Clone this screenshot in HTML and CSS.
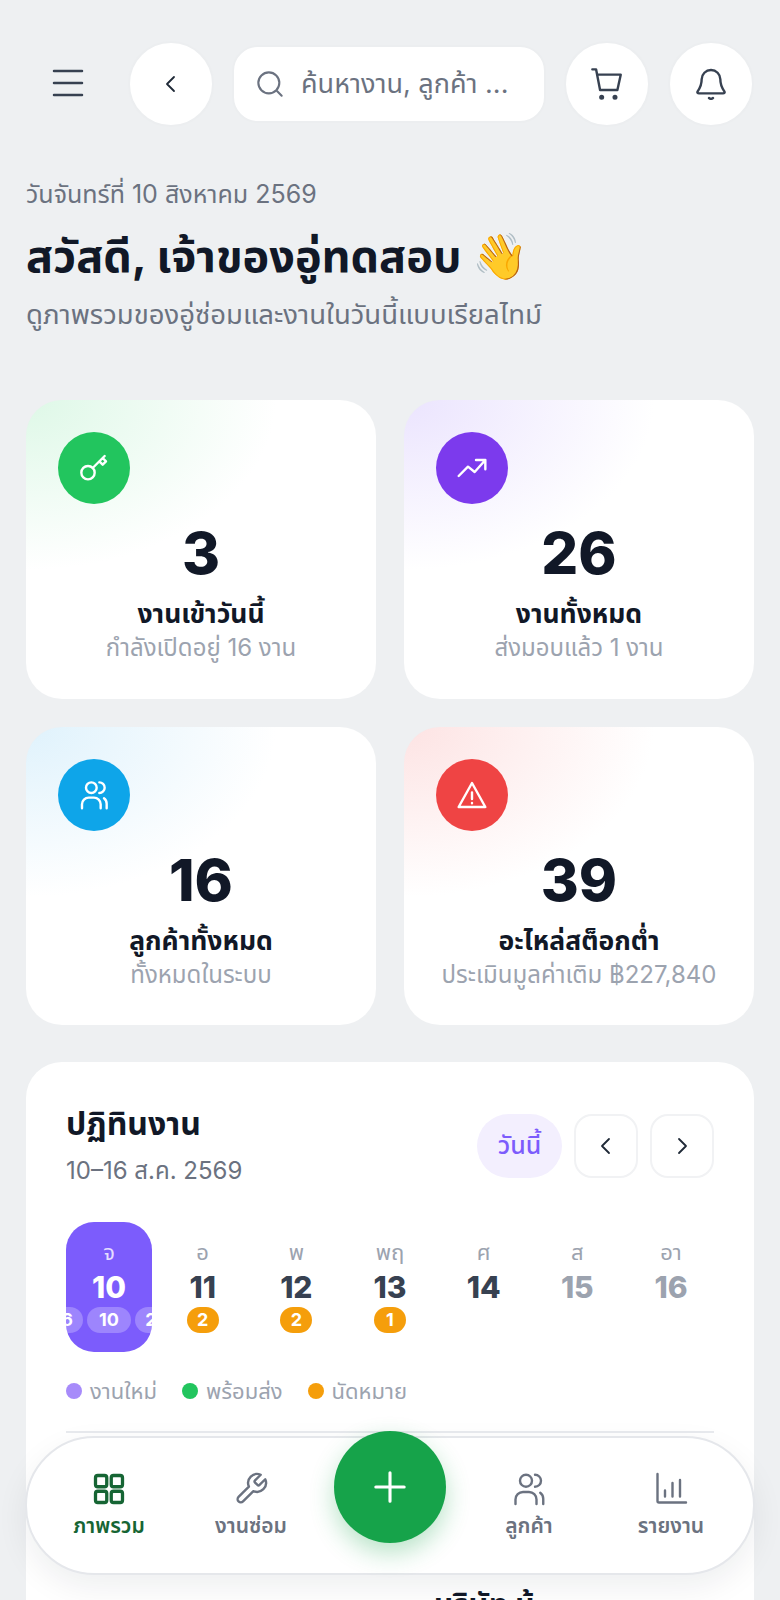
FILE: index.html
```html
<!DOCTYPE html>
<html lang="th">
<head>
    <meta charset="UTF-8">
    <meta name="viewport" content="width=device-width, initial-scale=1.0">
    <title>Dashboard</title>
    <link rel="stylesheet" href="styles.css">
</head>
<body>
    <header class="topbar">
        <button class="menu-btn" aria-label="menu">
            <svg width="32" height="28" viewBox="0 0 32 28" fill="none" stroke="#374151" stroke-width="2.5" stroke-linecap="round"><path d="M2 2h28M2 14h28M2 26h28"/></svg>
        </button>
        <button class="round-btn" aria-label="back">
            <svg class="ico-sm" viewBox="0 0 24 24"><path d="M15 5l-7 7 7 7"/></svg>
        </button>
        <div class="search">
            <svg width="28" height="28" viewBox="0 0 24 24" fill="none" stroke="#6b7280" stroke-width="1.8" stroke-linecap="round"><circle cx="11" cy="11" r="9"/><path d="M18 18l4 4"/></svg>
            <span>ค้นหางาน, ลูกค้า ...</span>
        </div>
        <button class="round-btn" aria-label="cart">
            <svg class="ico" viewBox="0 0 24 24"><path d="M1 1h2.800l3 15.500h13l2.500-11.500H4.700"/><circle class="ico-dot" cx="8" cy="22" r="1"/><circle class="ico-dot" cx="18" cy="22" r="1"/></svg>
        </button>
        <button class="round-btn" aria-label="notifications">
            <svg class="ico" viewBox="0 0 24 24"><path d="M12 1.500a7 7 0 0 0-7 7c0 5-2 7.500-3 9-.5.800 0 1.500 1 1.500h18c1 0 1.500-.7 1-1.500-1-1.500-3-4-3-9a7 7 0 0 0-7-7zM10.500 22.500q1.500 1.200 3 0"/></svg>
        </button>
    </header>

    <section class="greeting">
        <p class="date">วันจันทร์ที่ 10 สิงหาคม 2569</p>
        <h1>สวัสดี, เจ้าของอู่ทดสอบ 👋</h1>
        <p class="lead">ดูภาพรวมของอู่ซ่อมและงานในวันนี้แบบเรียลไทม์</p>
    </section>

    <section class="stats">
        <div class="stat stat-green">
            <div class="stat-icon"><svg viewBox="0 0 24 24"><circle cx="7.500" cy="15.500" r="5"/><path d="M11 12l9-9M16 7l2.500 2.500 2.500-2.500L18.500 4.500"/></svg></div>
            <div class="stat-num">3</div>
            <div class="stat-label">งานเข้าวันนี้</div>
            <div class="stat-sub">กำลังเปิดอยู่ 16 งาน</div>
        </div>
        <div class="stat stat-purple">
            <div class="stat-icon"><svg viewBox="0 0 24 24"><path d="M2 18l7-7 5 4 8-9M15 6h7v7"/></svg></div>
            <div class="stat-num">26</div>
            <div class="stat-label">งานทั้งหมด</div>
            <div class="stat-sub">ส่งมอบแล้ว 1 งาน</div>
        </div>
        <div class="stat stat-blue">
            <div class="stat-icon"><svg viewBox="0 0 24 24"><circle cx="10" cy="6.500" r="4"/><path d="M16 2.500a4 4 0 0 1 0 8M3 22v-3a5 5 0 0 1 5-5h4a5 5 0 0 1 5 5v3M19.500 14.500a5 5 0 0 1 2 4v3.500"/></svg></div>
            <div class="stat-num">16</div>
            <div class="stat-label">ลูกค้าทั้งหมด</div>
            <div class="stat-sub">ทั้งหมดในระบบ</div>
        </div>
        <div class="stat stat-red">
            <div class="stat-icon"><svg viewBox="0 0 24 24"><path d="M12 3l10 18H2zM12 10v5M12 18v.2"/></svg></div>
            <div class="stat-num">39</div>
            <div class="stat-label">อะไหล่สต็อกต่ำ</div>
            <div class="stat-sub">ประเมินมูลค่าเติม ฿227,840</div>
        </div>
    </section>

    <section class="calendar">
        <div class="cal-head">
            <div>
                <h2>ปฏิทินงาน</h2>
                <p class="cal-range">10–16 ส.ค. 2569</p>
            </div>
            <div class="cal-actions">
                <button class="today-btn">วันนี้</button>
                <button class="arrow-btn" aria-label="previous"><svg class="ico-sm" viewBox="0 0 24 24"><path d="M15 5l-7 7 7 7"/></svg></button>
                <button class="arrow-btn" aria-label="next"><svg class="ico-sm" viewBox="0 0 24 24"><path d="M9 5l7 7-7 7"/></svg></button>
            </div>
        </div>

        <div class="week">
            <div class="day day-active">
                <span class="day-name">จ</span>
                <span class="day-num">10</span>
                <div class="pills"><span class="pill pill-soft">6</span><span class="pill pill-mid">10</span><span class="pill pill-soft">2</span></div>
            </div>
            <div class="day">
                <span class="day-name">อ</span>
                <span class="day-num">11</span>
                <div class="pills"><span class="pill">2</span></div>
            </div>
            <div class="day">
                <span class="day-name">พ</span>
                <span class="day-num">12</span>
                <div class="pills"><span class="pill">2</span></div>
            </div>
            <div class="day">
                <span class="day-name">พฤ</span>
                <span class="day-num">13</span>
                <div class="pills"><span class="pill">1</span></div>
            </div>
            <div class="day">
                <span class="day-name">ศ</span>
                <span class="day-num">14</span>
            </div>
            <div class="day day-off">
                <span class="day-name">ส</span>
                <span class="day-num">15</span>
            </div>
            <div class="day day-off">
                <span class="day-name">อา</span>
                <span class="day-num">16</span>
            </div>
        </div>

        <div class="legend">
            <span class="legend-item"><i class="dot dot-purple"></i>งานใหม่</span>
            <span class="legend-item"><i class="dot dot-green"></i>พร้อมส่ง</span>
            <span class="legend-item"><i class="dot dot-orange"></i>นัดหมาย</span>
        </div>

        <div class="divider"></div>
        <div class="cal-detail">บริษัท น้</div>
    </section>

    <nav class="bottom-nav">
        <a class="nav-item nav-active">
            <svg viewBox="0 0 24 24"><rect x="3" y="3" width="7.500" height="7.500" rx="1.500"/><rect x="13.500" y="3" width="7.500" height="7.500" rx="1.500"/><rect x="3" y="13.500" width="7.500" height="7.500" rx="1.500"/><rect x="13.500" y="13.500" width="7.500" height="7.500" rx="1.500"/></svg>
            ภาพรวม
        </a>
        <a class="nav-item">
            <svg viewBox="0 0 24 24"><path d="M14.700 6.300a1 1 0 0 0 0 1.400l1.600 1.600a1 1 0 0 0 1.400 0l3.800-3.800a6 6 0 0 1-7.900 7.900l-6.900 6.900a2.100 2.100 0 0 1-3-3l6.900-6.900a6 6 0 0 1 7.900-7.900z"/></svg>
            งานซ่อม
        </a>
        <span class="nav-gap"></span>
        <a class="nav-item">
            <svg viewBox="0 0 24 24"><circle cx="10" cy="6.500" r="4"/><path d="M16 2.500a4 4 0 0 1 0 8M3 22v-3a5 5 0 0 1 5-5h4a5 5 0 0 1 5 5v3M19.500 14.500a5 5 0 0 1 2 4v3.500"/></svg>
            ลูกค้า
        </a>
        <a class="nav-item">
            <svg viewBox="0 0 24 24"><path d="M3 2v18a1 1 0 0 0 1 1h18M8 17v-4M13 17V8M18 17V6"/></svg>
            รายงาน
        </a>
        <button class="fab" aria-label="add">
            <svg width="34" height="34" viewBox="0 0 24 24" fill="none" stroke="#fff" stroke-width="2.200" stroke-linecap="round"><path d="M12 2v20M2 12h20"/></svg>
        </button>
    </nav>
</body>
</html>
```

FILE: styles.css
```css
* {
    box-sizing: border-box;
}
html, body {
    height: 1600px;
    overflow: hidden;
}
body {
    position: relative;
    margin: 0;
    padding: 41px 26px 0;
    background: #eef0f2;
    font-family: Inter, "Noto Sans", "Noto Sans Thai", sans-serif;
    color: #111827;
}
button {
    font-family: inherit;
    cursor: pointer;
}
p, h1, h2 {
    margin: 0;
}
.ico, .ico-sm {
    fill: none;
    stroke: #1f2937;
    stroke-width: 1.8;
    stroke-linecap: round;
    stroke-linejoin: round;
}
.ico {
    width: 32px;
    height: 32px;
    stroke: #374151;
}
.ico-sm {
    width: 24px;
    height: 24px;
}
.ico-dot {
    fill: #374151;
}

.topbar {
    display: flex;
    align-items: center;
    gap: 18px;
}
.menu-btn {
    flex: 0 0 84px;
    height: 86px;
    padding: 0;
    border: 0;
    background: none;
}
.round-btn {
    flex: 0 0 86px;
    height: 86px;
    padding: 0;
    display: flex;
    align-items: center;
    justify-content: center;
    background: #fff;
    border: 2px solid #eceef0;
    border-radius: 50%;
}
.search {
    flex: 1;
    height: 78px;
    display: flex;
    align-items: center;
    gap: 17px;
    padding: 0 22px;
    background: #fff;
    border: 2px solid #eceef0;
    border-radius: 26px;
    font-size: 27px;
    color: #6b7280;
}

.greeting {
    margin-top: 50px;
}
.date {
    font-size: 25px;
    line-height: 34px;
    color: #6b7280;
}
h1 {
    margin-top: 15px;
    font-size: 45px;
    line-height: 60px;
    font-weight: 700;
}
.lead {
    margin-top: 10px;
    font-size: 27.500px;
    line-height: 36px;
    color: #6b7280;
}

.stats {
    margin-top: 68px;
    display: grid;
    grid-template-columns: 1fr 1fr;
    gap: 28px;
}
.stat {
    height: 298.500px;
    padding: 32px 32px 0;
    text-align: center;
    background-color: #fff;
    border-radius: 36px;
}
.stat-green { background-image: radial-gradient(ellipse 250px 170px at 0 0, #def8e7, #fff); }
.stat-purple { background-image: radial-gradient(ellipse 250px 170px at 0 0, #ebe4fe, #fff); }
.stat-blue { background-image: radial-gradient(ellipse 250px 170px at 0 0, #dff2fc, #fff); }
.stat-red { background-image: radial-gradient(ellipse 250px 170px at 0 0, #fde3e3, #fff); }
.stat-icon {
    width: 72px;
    height: 72px;
    display: flex;
    align-items: center;
    justify-content: center;
    border-radius: 50%;
}
.stat-icon svg {
    width: 32px;
    height: 32px;
    fill: none;
    stroke: #fff;
    stroke-width: 1.8;
    stroke-linecap: round;
    stroke-linejoin: round;
}
.stat-green .stat-icon { background: #22c55e; }
.stat-purple .stat-icon { background: #7c3aed; }
.stat-blue .stat-icon { background: #0ea5e9; }
.stat-red .stat-icon { background: #ef4444; }
.stat-num {
    margin-top: 13px;
    font-size: 58px;
    line-height: 72px;
    font-weight: 800;
}
.stat-label {
    margin-top: 7px;
    font-size: 26.500px;
    line-height: 34px;
    font-weight: 700;
}
.stat-sub {
    margin-top: 1px;
    font-size: 24px;
    line-height: 34px;
    color: #9ca3af;
}

.calendar {
    margin-top: 37px;
    height: 700px;
    padding: 40px;
    background: #fff;
    border-radius: 36px;
}
.cal-head {
    display: flex;
    justify-content: space-between;
    align-items: flex-start;
}
h2 {
    font-size: 32px;
    line-height: 44px;
    font-weight: 700;
}
.cal-range {
    margin-top: 8px;
    font-size: 24px;
    line-height: 34px;
    color: #6b7280;
}
.cal-actions {
    display: flex;
    gap: 12px;
    margin-top: 12px;
}
.today-btn {
    width: 85px;
    height: 64px;
    padding: 0;
    background: #f3effe;
    border: 0;
    border-radius: 32px;
    font-size: 25px;
    font-weight: 500;
    color: #7c5cfc;
}
.arrow-btn {
    width: 64px;
    height: 64px;
    padding: 0;
    display: flex;
    align-items: center;
    justify-content: center;
    background: #fff;
    border: 2px solid #f1f2f4;
    border-radius: 18px;
}

.week {
    margin-top: 34px;
    display: grid;
    grid-template-columns: repeat(7, 86px);
    justify-content: space-between;
}
.day {
    height: 130px;
    padding-top: 15px;
    display: flex;
    flex-direction: column;
    align-items: center;
    overflow: hidden;
    border-radius: 28px;
}
.day-name {
    font-size: 22px;
    line-height: 30px;
    color: #9ca3af;
}
.day-num {
    font-size: 30px;
    line-height: 40px;
    font-weight: 800;
    color: #374151;
}
.day-off .day-num {
    color: #9ca3af;
}
.day-active {
    background: #7c5cfc;
}
.day-active .day-name {
    color: #e4dcff;
}
.day-active .day-num {
    color: #fff;
}
.pills {
    display: flex;
    gap: 4px;
    justify-content: center;
}
.pill {
    flex: 0 0 auto;
    min-width: 32px;
    height: 26px;
    padding: 0 6px;
    border-radius: 13px;
    background: #f59e0b;
    color: #fff;
    font-size: 18px;
    line-height: 26px;
    font-weight: 700;
    text-align: center;
}
.pill-mid {
    min-width: 44px;
    background: rgba(255, 255, 255, .25);
}
.pill-soft {
    background: rgba(255, 255, 255, .25);
}

.legend {
    margin-top: 24px;
    display: flex;
    gap: 25px;
    font-size: 22px;
    line-height: 30px;
    color: #9ca3af;
}
.legend-item {
    display: flex;
    align-items: center;
    gap: 8px;
}
.dot {
    width: 16px;
    height: 16px;
    border-radius: 50%;
}
.dot-purple { background: #a78bfa; }
.dot-green { background: #22c55e; }
.dot-orange { background: #f59e0b; }
.divider {
    margin-top: 25px;
    height: 2px;
    background: #e8eaee;
}
.cal-detail {
    margin-top: 150px;
    padding-left: 368px;
    font-size: 30px;
    font-weight: 700;
}

.bottom-nav {
    position: absolute;
    left: 25px;
    top: 1436px;
    width: 730px;
    height: 139px;
    display: grid;
    grid-template-columns: 142px 142px 136px 142px 142px;
    align-items: center;
    padding: 0 11px;
    background: #fff;
    border: 2px solid #e5e7eb;
    border-radius: 70px;
    box-shadow: 0 12px 32px rgba(17, 24, 39, .07);
}
.nav-item {
    display: flex;
    flex-direction: column;
    align-items: center;
    gap: 5px;
    font-size: 21px;
    line-height: 28px;
    font-weight: 600;
    color: #6b7280;
}
.nav-item svg {
    width: 36px;
    height: 36px;
    fill: none;
    stroke: #6b7280;
    stroke-width: 1.6;
    stroke-linecap: round;
    stroke-linejoin: round;
}
.nav-active {
    color: #166534;
}
.nav-active svg {
    stroke: #166534;
    stroke-width: 2.200;
}
.fab {
    position: absolute;
    left: 307px;
    top: -7px;
    width: 112px;
    height: 112px;
    padding: 0;
    display: flex;
    align-items: center;
    justify-content: center;
    background: #16a34a;
    border: 0;
    border-radius: 50%;
    box-shadow: 0 10px 24px rgba(22, 163, 74, .3);
}
```
